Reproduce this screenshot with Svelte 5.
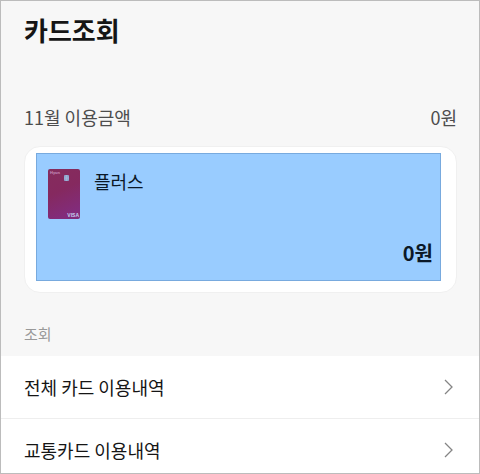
<script>
  const month = 11;
  const total = '0원';
  const links = ['전체 카드 이용내역', '교통카드 이용내역'];
</script>

<main>
  <h1>카드조회</h1>

  <div class="summary">
    <span>{month}월 이용금액</span>
    <span>{total}</span>
  </div>

  <section class="card">
    <button type="button" class="product">
      <span class="info">
        <svg class="plate" width="32" height="50" viewBox="0 0 32 50" aria-hidden="true">
          <defs>
            <linearGradient id="plate" x1="0" y1="0" x2="0.3" y2="1">
              <stop offset="0" stop-color="#852c5c" />
              <stop offset="0.5" stop-color="#85295f" />
              <stop offset="1" stop-color="#822c7b" />
            </linearGradient>
          </defs>
          <rect width="32" height="50" rx="2" fill="url(#plate)" />
          <rect x="16" y="6" width="5" height="6" rx="1" fill="#91a6ce" />
          <path d="M16 9h5M18.5 6v6" stroke="#a9bddd" stroke-width="0.6" />
          <text x="2" y="5" font-size="4" font-weight="700" fill="#c58fbd">Hyun</text>
          <text x="31" y="48" font-size="5" font-weight="700" text-anchor="end" fill="#c6cff2">VISA</text>
        </svg>
        <span class="name">플러스</span>
      </span>
      <strong>{total}</strong>
    </button>
  </section>

  <h2>조회</h2>

  <nav>
    {#each links as label}
      <a href="#list">
        <span>{label}</span>
        <svg width="10" height="16" viewBox="0 0 10 16" aria-hidden="true">
          <path d="M1 1l7 7-7 7" fill="none" stroke="#858585" stroke-width="1.3" />
        </svg>
      </a>
    {/each}
  </nav>
</main>

<style>
  :global(body) {
    margin: 0;
  }

  main {
    box-sizing: border-box;
    height: 100vh;
    overflow: hidden;
    border: 1px solid #bcbcbc;
    background: #f7f7f7;
    color: #151515;
    font-family: 'Noto Sans CJK KR', sans-serif;
    font-size: 18px;
    line-height: 26px;
  }

  h1 {
    margin: 0;
    padding: 10px 22px 0 23px;
    font-size: 26px;
    font-weight: 700;
    line-height: 38px;
  }

  .summary {
    display: flex;
    justify-content: space-between;
    padding: 55px 22px 16px 23px;
    color: #4d4d4d;
  }

  .card {
    margin: 0 22px 0 23px;
    padding: 6px 15px 11px 11px;
    border: 1px solid #f0f0f0;
    border-radius: 16px;
    background: #fff;
  }

  .product {
    box-sizing: border-box;
    display: flex;
    flex-direction: column;
    justify-content: space-between;
    width: 100%;
    min-height: 128px;
    padding: 15px 7px 14px 11px;
    border: 1px solid #78aade;
    border-radius: 0;
    background: #99ccff;
    color: #0b1827;
    font: inherit;
    text-align: left;
    cursor: pointer;
  }

  .info {
    display: flex;
    align-items: flex-start;
    gap: 14px;
  }

  .name {
    line-height: 24px;
  }

  .plate {
    font-family: 'Liberation Sans', sans-serif;
  }

  strong {
    align-self: flex-end;
    font-size: 20px;
    font-weight: 700;
  }

  h2 {
    margin: 0;
    padding: 28px 22px 9px 23px;
    color: #999;
    font-size: 15px;
    font-weight: 400;
    line-height: 26px;
  }

  nav {
    background: #fff;
  }

  a {
    display: flex;
    align-items: center;
    justify-content: space-between;
    padding: 18px 25px 18px 23px;
    border-bottom: 1px solid #eee;
    color: inherit;
    text-decoration: none;
  }
</style>
